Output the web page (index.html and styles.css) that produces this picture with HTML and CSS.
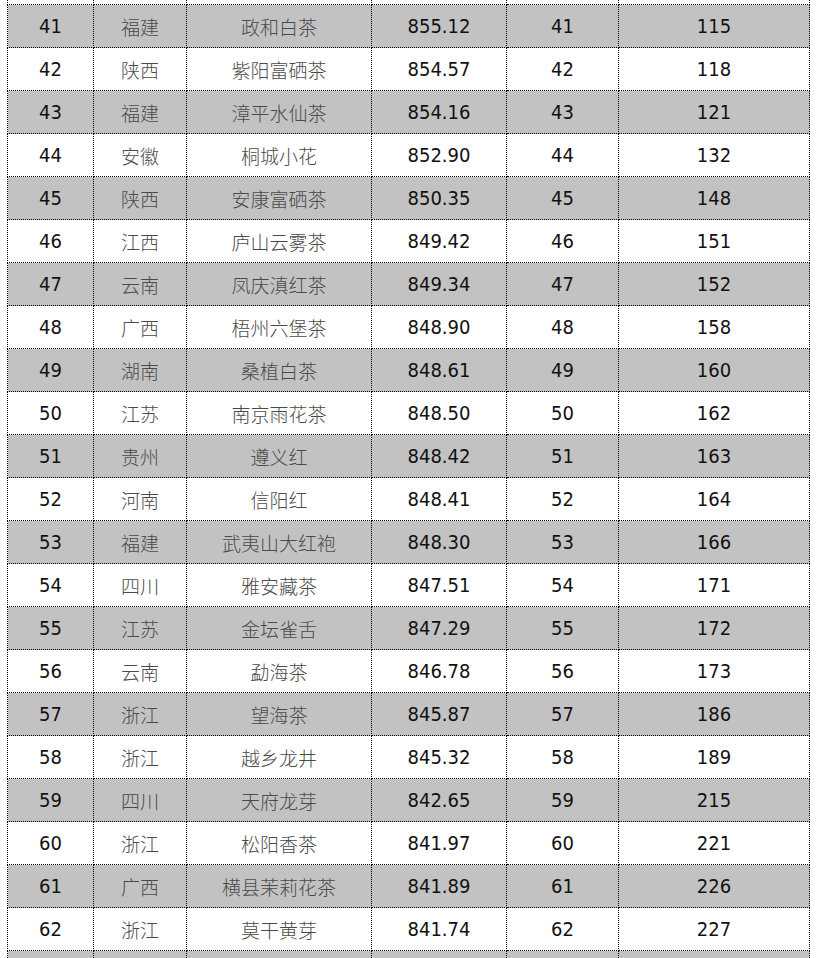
FILE: index.html
```html
<!DOCTYPE html>
<html lang="zh-CN">
<head>
<meta charset="utf-8">
<title>茶叶品牌排行</title>
<link rel="stylesheet" href="styles.css">
</head>
<body>
<div class="viewport">
<table class="rank">
<colgroup>
<col class="c1"><col class="c2"><col class="c3"><col class="c4"><col class="c5"><col class="c6">
</colgroup>
<tbody>
<tr class="even"><td></td><td class="zh"></td><td class="zh"></td><td></td><td></td><td></td></tr>
<tr class="odd"><td>41</td><td class="zh">福建</td><td class="zh">政和白茶</td><td>855.12</td><td>41</td><td>115</td></tr>
<tr class="even"><td>42</td><td class="zh">陕西</td><td class="zh">紫阳富硒茶</td><td>854.57</td><td>42</td><td>118</td></tr>
<tr class="odd"><td>43</td><td class="zh">福建</td><td class="zh">漳平水仙茶</td><td>854.16</td><td>43</td><td>121</td></tr>
<tr class="even"><td>44</td><td class="zh">安徽</td><td class="zh">桐城小花</td><td>852.90</td><td>44</td><td>132</td></tr>
<tr class="odd"><td>45</td><td class="zh">陕西</td><td class="zh">安康富硒茶</td><td>850.35</td><td>45</td><td>148</td></tr>
<tr class="even"><td>46</td><td class="zh">江西</td><td class="zh">庐山云雾茶</td><td>849.42</td><td>46</td><td>151</td></tr>
<tr class="odd"><td>47</td><td class="zh">云南</td><td class="zh">凤庆滇红茶</td><td>849.34</td><td>47</td><td>152</td></tr>
<tr class="even"><td>48</td><td class="zh">广西</td><td class="zh">梧州六堡茶</td><td>848.90</td><td>48</td><td>158</td></tr>
<tr class="odd"><td>49</td><td class="zh">湖南</td><td class="zh">桑植白茶</td><td>848.61</td><td>49</td><td>160</td></tr>
<tr class="even"><td>50</td><td class="zh">江苏</td><td class="zh">南京雨花茶</td><td>848.50</td><td>50</td><td>162</td></tr>
<tr class="odd"><td>51</td><td class="zh">贵州</td><td class="zh">遵义红</td><td>848.42</td><td>51</td><td>163</td></tr>
<tr class="even"><td>52</td><td class="zh">河南</td><td class="zh">信阳红</td><td>848.41</td><td>52</td><td>164</td></tr>
<tr class="odd"><td>53</td><td class="zh">福建</td><td class="zh">武夷山大红袍</td><td>848.30</td><td>53</td><td>166</td></tr>
<tr class="even"><td>54</td><td class="zh">四川</td><td class="zh">雅安藏茶</td><td>847.51</td><td>54</td><td>171</td></tr>
<tr class="odd"><td>55</td><td class="zh">江苏</td><td class="zh">金坛雀舌</td><td>847.29</td><td>55</td><td>172</td></tr>
<tr class="even"><td>56</td><td class="zh">云南</td><td class="zh">勐海茶</td><td>846.78</td><td>56</td><td>173</td></tr>
<tr class="odd"><td>57</td><td class="zh">浙江</td><td class="zh">望海茶</td><td>845.87</td><td>57</td><td>186</td></tr>
<tr class="even"><td>58</td><td class="zh">浙江</td><td class="zh">越乡龙井</td><td>845.32</td><td>58</td><td>189</td></tr>
<tr class="odd"><td>59</td><td class="zh">四川</td><td class="zh">天府龙芽</td><td>842.65</td><td>59</td><td>215</td></tr>
<tr class="even"><td>60</td><td class="zh">浙江</td><td class="zh">松阳香茶</td><td>841.97</td><td>60</td><td>221</td></tr>
<tr class="odd"><td>61</td><td class="zh">广西</td><td class="zh">横县茉莉花茶</td><td>841.89</td><td>61</td><td>226</td></tr>
<tr class="even"><td>62</td><td class="zh">浙江</td><td class="zh">莫干黄芽</td><td>841.74</td><td>62</td><td>227</td></tr>
<tr class="odd"><td></td><td class="zh"></td><td class="zh"></td><td></td><td></td><td></td></tr>
</tbody>
</table>
</div>
</body>
</html>
```
FILE: styles.css
```css
html, body {
  margin: 0;
  padding: 0;
  background: #ffffff;
}

.viewport {
  width: 817px;
  height: 958px;
  overflow: hidden;
}

.rank {
  border-collapse: collapse;
  table-layout: fixed;
  width: 802px;
  margin: -39px 0 0 7px;
  font-family: "DejaVu Sans Condensed", "DejaVu Sans", Tahoma, sans-serif;
  font-size: 20px;
  color: #111111;
}

.c1 { width: 86px; }
.c2 { width: 93px; }
.c3 { width: 185px; }
.c4 { width: 135px; }
.c5 { width: 112px; }
.c6 { width: 191px; }

.rank td {
  height: 42px;
  padding: 0;
  border: 1px dotted #000000;
  text-align: center;
  vertical-align: middle;
  line-height: 1;
  white-space: nowrap;
}

.rank td.zh {
  font-family: "Noto Sans CJK SC", sans-serif;
  font-size: 19px;
  font-weight: 300;
  color: #4a4a4a;
}

.rank tr.odd td {
  background: #c2c2c2;
}

.rank tr.even td {
  background: #ffffff;
}
```
